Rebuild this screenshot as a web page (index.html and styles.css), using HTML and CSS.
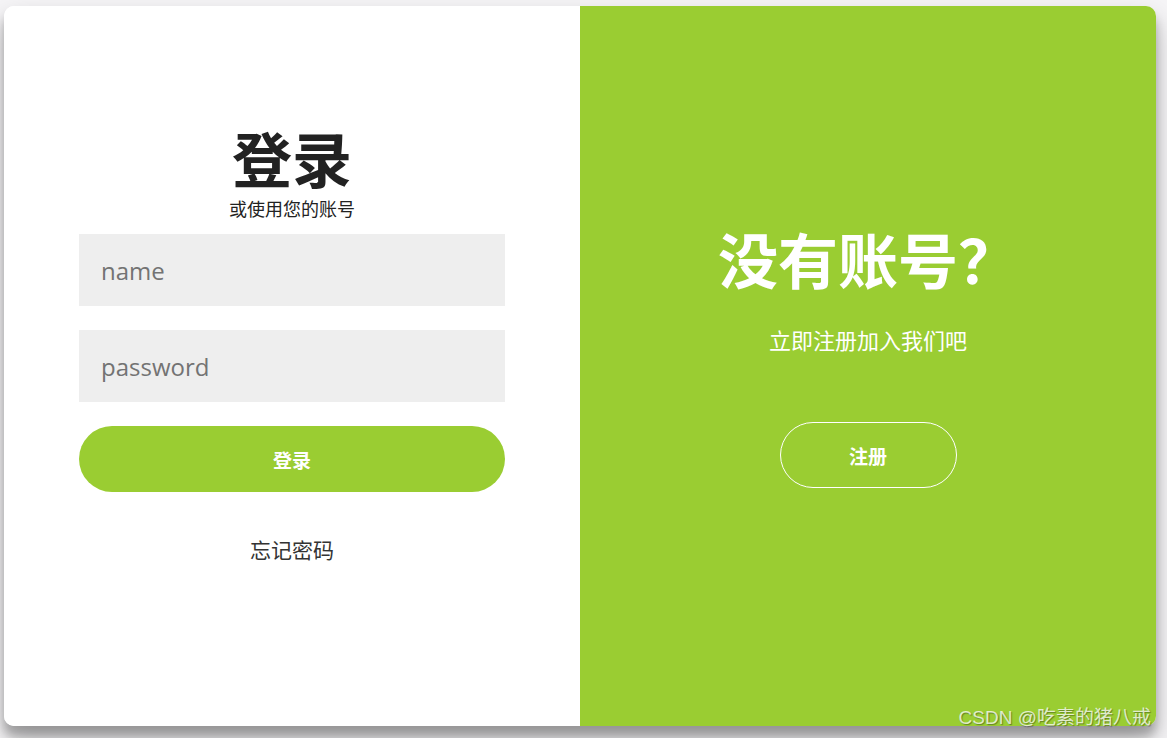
FILE: index.html
```html
<!DOCTYPE html>
<html lang="zh-CN">
<head>
    <meta charset="UTF-8">
    <meta name="viewport" content="width=device-width, initial-scale=1.0">
    <title>登录</title>
    <link rel="stylesheet" href="styles.css">
</head>
<body>

<div id="container">
    <div class="form-container sign-in">
        <form>
            <h1>登录</h1>
            <span class="sub">或使用您的账号</span>
            <input type="text" placeholder="name">
            <input type="password" placeholder="password">
            <button type="button" class="btn-login">登录</button>
            <a href="#" class="forgot">忘记密码</a>
        </form>
    </div>

    <div class="overlay-panel">
        <h1>没有账号？</h1>
        <p>立即注册加入我们吧</p>
        <button type="button" class="ghost">注册</button>
    </div>
</div>

<div class="watermark">CSDN @吃素的猪八戒</div>

</body>
</html>
```

FILE: styles.css
```css
* {
    box-sizing: border-box;
}
body {
    margin: 0;
    height: 738px;
    overflow: hidden;
    background: #f6f5f7;
    font-family: "Noto Sans CJK SC", "Open Sans", sans-serif;
}
#container {
    display: flex;
    width: 1152px;
    height: 720px;
    margin: 6px 0 0 4px;
    background: #fff;
    border-radius: 10px;
    overflow: hidden;
    box-shadow: 0 14px 28px rgba(0, 0, 0, 0.25), 0 10px 10px rgba(0, 0, 0, 0.22);
}
.form-container {
    width: 576px;
    background: #fff;
}
.form-container form {
    display: flex;
    flex-direction: column;
    align-items: center;
    padding: 121px 75px 0;
}
h1 {
    margin: 0;
    font-weight: bold;
    font-size: 60px;
    line-height: 1;
}
.sign-in h1 {
    color: #222;
}
.sub {
    margin-top: 12px;
    font-size: 18px;
    line-height: 1;
    color: #222;
}
input {
    width: 426px;
    height: 72px;
    margin-top: 24px;
    padding: 0 22px;
    border: none;
    outline: none;
    background: #eee;
    font-family: "Open Sans", "Noto Sans CJK SC", sans-serif;
    font-size: 24px;
    color: #333;
}
input:first-of-type {
    margin-top: 17px;
}
input::placeholder {
    color: #737373;
}
button {
    font-family: "Noto Sans CJK SC", sans-serif;
    font-weight: bold;
    font-size: 19px;
    color: #fff;
    border-radius: 40px;
    cursor: pointer;
}
.btn-login {
    width: 426px;
    height: 66px;
    margin-top: 24px;
    border: none;
    background: #9acd32;
}
.forgot {
    margin-top: 47px;
    font-size: 21px;
    line-height: 1;
    color: #333;
    text-decoration: none;
}
.overlay-panel {
    width: 576px;
    background: #9acd32;
    color: #fff;
    display: flex;
    flex-direction: column;
    align-items: center;
    padding-top: 222px;
}
.overlay-panel p {
    margin: 40px 0 0;
    font-size: 22px;
    line-height: 1;
}
.ghost {
    width: 177px;
    height: 66px;
    margin-top: 72px;
    background: transparent;
    border: 1px solid #fff;
}
.watermark {
    position: absolute;
    right: 16px;
    bottom: 9px;
    font-family: "Liberation Sans", "Noto Sans CJK SC", sans-serif;
    font-size: 19px;
    color: rgba(255, 255, 255, 0.75);
    text-shadow: 1px 1px 1px rgba(0, 0, 0, 0.35);
}
```
